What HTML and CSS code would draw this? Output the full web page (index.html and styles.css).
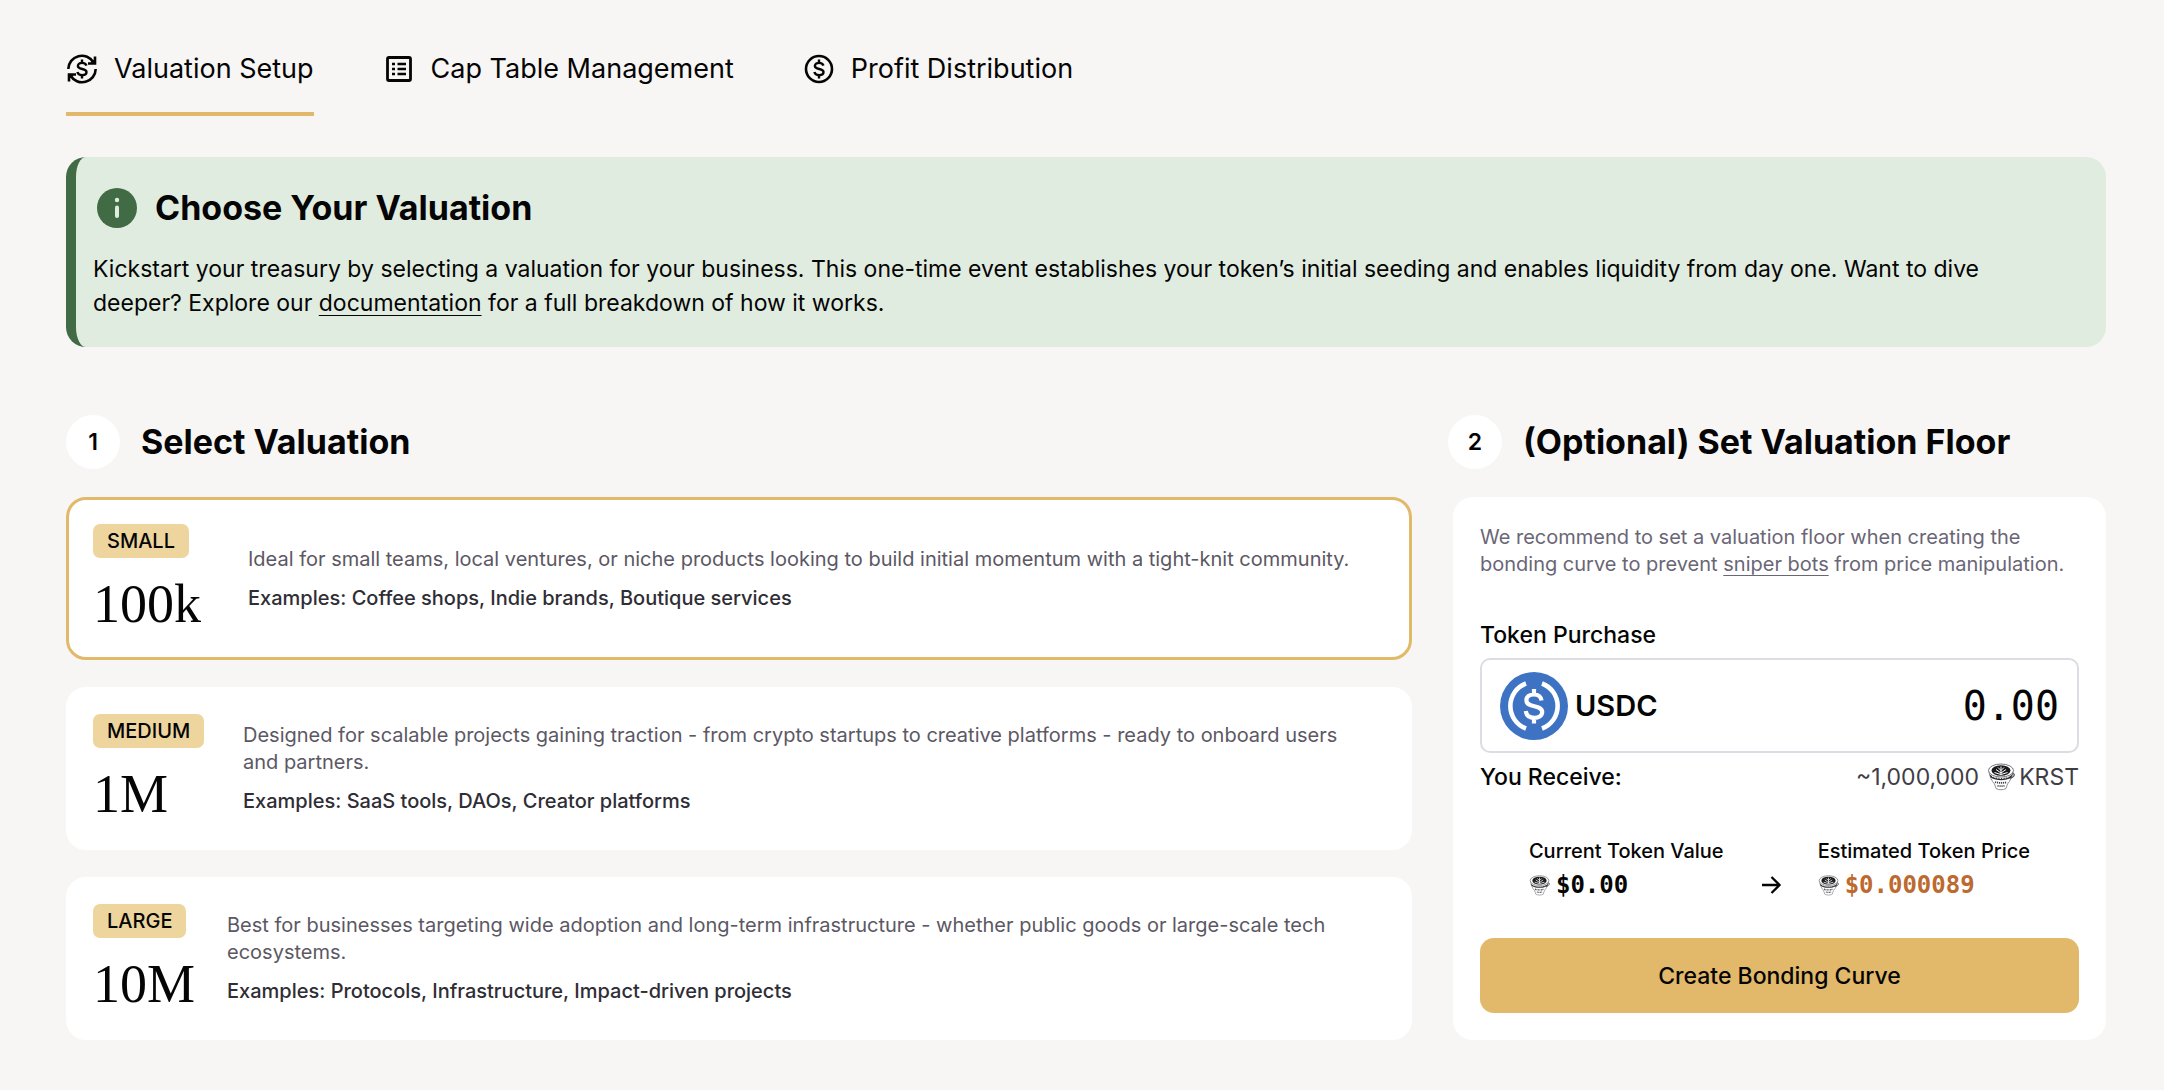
FILE: index.html
```html
<!DOCTYPE html>
<html lang="en">
<head>
<meta charset="utf-8">
<meta name="viewport" content="width=device-width, initial-scale=1">
<title>Valuation Setup</title>
<link rel="stylesheet" href="styles.css">
</head>
<body>
<svg class="sprite" aria-hidden="true">
  <symbol id="dollar" viewBox="0 0 14 20">
    <path d="M11.4 6.6C10.9 4.8 9.3 3.9 7.1 3.9 4.6 3.9 2.9 5 2.9 6.9c0 4.3 8.6 1.9 8.6 6.2 0 2-1.8 3.1-4.3 3.1-2.6 0-4.3-1.100-4.800-3.200M7 .6v3.200M7 16.200v3.200" fill="none" stroke="currentColor" stroke-width="2.400"/>
  </symbol>
  <symbol id="cup" viewBox="0 0 28 28">
    <path d="M2 8.500c.6 5 2.700 9.500 5.500 12.500l1.500 4.500c2.600 1.700 7.400 1.700 10 0l1.500-4.500c2.800-3 4.900-7.500 5.500-12.500" fill="#fff" stroke="#77757c" stroke-width=".8"/>
    <path d="M24.500 11c2.600-1.200 3.400.6 2.200 2.200-1 1.400-2.600 2-4 1.800" fill="none" stroke="#55535a" stroke-width="1.200"/>
    <ellipse cx="14" cy="7.500" rx="12.500" ry="6.500" fill="#fff" stroke="#55535a" stroke-width=".8"/>
    <ellipse cx="14" cy="7.500" rx="9.500" ry="5.200" fill="#1a1a1a"/>
    <path d="M14 11.500V3.500M14 10 9 6.500M14 10l5-3.500M14 7.500 11 4.500M14 7.500l3-3M14 11.500l-6.500-2M14 11.500l6.500-2" stroke="#fff" stroke-width="1" fill="none"/>
    <path d="M2.500 11.500c6 4.800 17 4.800 23 0l-1.200 3c-5.500 3.500-15 3.500-20.600 0z" fill="#2c2b30"/>
    <path d="M5 13.200c5 3 13 3 18 0" stroke="#fff" stroke-width="1" stroke-dasharray="1.600 1" fill="none"/>
    <path d="M8 19c4 1.200 8 1.200 12 0" stroke="#444" stroke-width="1.800" stroke-dasharray="1.200 .8" fill="none"/>
    <path d="M10.500 22.700c2.300.6 4.700.6 7 0" stroke="#444" stroke-width="1.600" stroke-dasharray="1.200 .8" fill="none"/>
  </symbol>
</svg>

<main class="page">
  <nav class="tabs" aria-label="Treasury">
    <a class="tab tab-active" href="#valuation" aria-current="page">
      <svg class="tab-icon" viewBox="0 0 32 32" aria-hidden="true">
        <g fill="none" stroke="currentColor" stroke-width="2.600">
          <path d="M2.300 16A13.500 13.500 0 0 1 27.500 9.500M29 3.500V10.500H22"/>
          <path d="M29.700 16A13.500 13.500 0 0 1 4.500 22.500M3 28.500V21.500H10"/>
        </g>
        <path d="M29.500 5v6h-6zM2.500 27v-6h6z" fill="currentColor"/>
        <use href="#dollar" x="9" y="6" width="14" height="20"/>
      </svg>
      Valuation Setup
    </a>
    <a class="tab" href="#cap-table">
      <svg class="tab-icon" viewBox="0 0 32 32" aria-hidden="true">
        <rect x="4.500" y="4.500" width="23" height="23" rx="1.500" fill="none" stroke="currentColor" stroke-width="2.800"/>
        <path d="M9 11h3M9 16h3M9 21h3M14.500 11h8.500M14.500 16h8.500M14.500 21h8.500" stroke="currentColor" stroke-width="2.600"/>
      </svg>
      Cap Table Management
    </a>
    <a class="tab" href="#profit">
      <svg class="tab-icon" viewBox="0 0 32 32" aria-hidden="true">
        <circle cx="16" cy="16" r="13" fill="none" stroke="currentColor" stroke-width="2.600"/>
        <use href="#dollar" x="9" y="6" width="14" height="20"/>
      </svg>
      Profit Distribution
    </a>
  </nav>

  <section class="banner">
    <div class="banner-head">
      <svg class="banner-icon" viewBox="0 0 48 48" aria-hidden="true">
        <circle cx="24" cy="24" r="20" fill="#416b44"/>
        <circle cx="24" cy="16" r="2.200" fill="#e1ece0"/>
        <path d="M24 23.500v8.500" stroke="#e1ece0" stroke-width="4" stroke-linecap="round"/>
      </svg>
      <h1 class="title">Choose Your Valuation</h1>
    </div>
    <p class="banner-text">Kickstart your treasury by selecting a valuation for your business. This one-time event establishes your token’s initial seeding and enables liquidity from day one. Want to dive deeper? Explore our <a class="link" href="#docs">documentation</a> for a full breakdown of how it works.</p>
  </section>

  <div class="steps">
    <div class="step"><span class="step-number">1</span><h2 class="title">Select Valuation</h2></div>
    <div class="step"><span class="step-number">2</span><h2 class="title">(Optional) Set Valuation Floor</h2></div>
  </div>

  <div class="columns">
    <div class="plans" role="radiogroup" aria-label="Select Valuation">
      <label class="plan">
        <input class="plan-radio" type="radio" name="plan" value="small" checked>
        <span class="plan-head plan-head-small"><span class="badge">SMALL</span><span class="plan-amount">100k</span></span>
        <span class="plan-body">
          <span class="plan-text">Ideal for small teams, local ventures, or niche products looking to build initial momentum with a tight-knit community.</span>
          <span class="plan-examples">Examples: Coffee shops, Indie brands, Boutique services</span>
        </span>
      </label>
      <label class="plan">
        <input class="plan-radio" type="radio" name="plan" value="medium">
        <span class="plan-head plan-head-medium"><span class="badge">MEDIUM</span><span class="plan-amount">1M</span></span>
        <span class="plan-body">
          <span class="plan-text">Designed for scalable projects gaining traction - from crypto startups to creative platforms - ready to onboard users and partners.</span>
          <span class="plan-examples">Examples: SaaS tools, DAOs, Creator platforms</span>
        </span>
      </label>
      <label class="plan">
        <input class="plan-radio" type="radio" name="plan" value="large">
        <span class="plan-head plan-head-large"><span class="badge">LARGE</span><span class="plan-amount">10M</span></span>
        <span class="plan-body">
          <span class="plan-text">Best for businesses targeting wide adoption and long-term infrastructure - whether public goods or large-scale tech ecosystems.</span>
          <span class="plan-examples">Examples: Protocols, Infrastructure, Impact-driven projects</span>
        </span>
      </label>
    </div>

    <form class="floor">
      <p class="floor-text">We recommend to set a valuation floor when creating the bonding curve to prevent <a class="link" href="#sniper-bots">sniper bots</a> from price manipulation.</p>
      <label class="field-label" for="amount">Token Purchase</label>
      <div class="field">
        <svg class="coin" viewBox="0 0 68 68" aria-hidden="true">
          <circle cx="34" cy="34" r="34" fill="#3e73c4"/>
          <path d="M26 11.500A24 24 0 0 0 26 56.500M42 11.500A24 24 0 0 1 42 56.500" fill="none" stroke="#fff" stroke-width="4.600"/>
          <path d="M41.500 28.500c-.6-3.900-3.300-6-7.600-6-4.500 0-7.500 2.200-7.500 5.700 0 8.300 15.800 3.700 15.800 11.900 0 3.500-3.200 5.700-8 5.700-4.900 0-7.900-2.300-8.400-6.700M34 17v6M34 45.500v6" fill="none" stroke="#fff" stroke-width="4.200"/>
        </svg>
        <span class="coin-name">USDC</span>
        <input class="amount" id="amount" type="text" inputmode="decimal" value="0.00">
      </div>
      <div class="receive">
        <span>You Receive:</span>
        <span class="receive-value">~1,000,000 <svg class="cup" aria-hidden="true"><use href="#cup"/></svg>KRST</span>
      </div>
      <div class="prices">
        <div class="price">
          <span>Current Token Value</span>
          <span class="price-value"><svg class="cup-small" aria-hidden="true"><use href="#cup"/></svg>$0.00</span>
        </div>
        <svg class="arrow" viewBox="0 0 26 26" aria-hidden="true"><path d="M4 13h17M13.500 5l8 8-8 8" fill="none" stroke="currentColor" stroke-width="2.300"/></svg>
        <div class="price">
          <span>Estimated Token Price</span>
          <span class="price-value price-new"><svg class="cup-small" aria-hidden="true"><use href="#cup"/></svg>$0.000089</span>
        </div>
      </div>
      <button class="submit" type="button">Create Bonding Curve</button>
    </form>
  </div>
</main>
</body>
</html>
```
FILE: styles.css
```css
* { box-sizing: border-box; }

body {
  margin: 0;
  background: #f7f6f4;
  color: #050505;
  font-family: Inter, "Liberation Sans", sans-serif;
  font-size: 23px;
  line-height: 34px;
}

h1, h2, p { margin: 0; }

.sprite { display: none; }

.page { padding: 48px 58px 48px 66px; }

.link {
  color: inherit;
  text-decoration: underline;
  text-decoration-thickness: 1px;
  text-underline-offset: 4px;
}

.title {
  font-size: 34px;
  font-weight: 700;
  line-height: 48px;
}

/* Tabs */
.tabs { display: flex; gap: 69px; }

.tab {
  display: flex;
  align-items: center;
  gap: 16px;
  padding: 4px 0 26px;
  border-bottom: 4px solid transparent;
  color: inherit;
  font-size: 27px;
  text-decoration: none;
}

.tab-active { border-bottom-color: #e2b96a; }

.tab-icon { width: 32px; height: 32px; }

/* Banner */
.banner {
  margin-top: 41px;
  padding: 27px 68px 27px 17px;
  border-left: 10px solid #416b44;
  border-radius: 20px;
  background: #e1ece0;
}

.banner-head {
  display: flex;
  align-items: center;
  gap: 14px;
  margin-bottom: 20px;
}

.banner-icon { width: 48px; height: 48px; }

/* Step headings */
.steps {
  display: grid;
  grid-template-columns: minmax(0, 1346fr) minmax(0, 658fr);
  gap: 36px;
  margin-top: 68px;
}

.step {
  display: flex;
  align-items: center;
  gap: 21px;
}

.step-number {
  width: 54px;
  height: 54px;
  border-radius: 50%;
  background: #fff;
  font-weight: 600;
  line-height: 54px;
  text-align: center;
}

/* Main columns */
.columns {
  display: grid;
  grid-template-columns: minmax(0, 1346fr) minmax(0, 653fr);
  gap: 41px;
  margin-top: 28px;
}

.plans {
  display: grid;
  gap: 27px;
}

.plan {
  display: flex;
  min-height: 163px;
  padding: 24px 36px 24px 24px;
  border: 3px solid #fff;
  border-radius: 20px;
  background: #fff;
  font-size: 20px;
  line-height: 27px;
  cursor: pointer;
}

.plan:has(:checked) { border-color: #e2b96a; }

.plan-radio {
  position: absolute;
  opacity: 0;
  pointer-events: none;
}

.plan-head {
  display: flex;
  flex: none;
  flex-direction: column;
  align-items: flex-start;
  gap: 17px;
}

.plan-head-small { width: 155px; }
.plan-head-medium { width: 150px; }
.plan-head-large { width: 134px; }

.badge {
  padding: 0 14px;
  border-radius: 7px;
  background: #eed59e;
  font-size: 20px;
  font-weight: 500;
  line-height: 34px;
}

.plan-amount {
  font-family: "Liberation Serif", serif;
  font-size: 54px;
  line-height: 58px;
}

.plan-body {
  display: flex;
  flex-direction: column;
  justify-content: center;
  gap: 12px;
}

.plan-text { color: #5b5864; }

.plan-examples { color: #2f2d35; font-weight: 500; }

/* Valuation floor */
.floor {
  display: flex;
  flex-direction: column;
  padding: 27px;
  border-radius: 20px;
  background: #fff;
}

.floor-text {
  color: #6a6676;
  font-size: 20px;
  line-height: 27px;
}

.field-label {
  margin: 40px 0 6px;
  font-weight: 500;
}

.field {
  display: flex;
  align-items: center;
  gap: 7px;
  height: 95px;
  padding: 0 18px;
  border: 2px solid #dcdce4;
  border-radius: 10px;
}

.coin { flex: none; width: 68px; height: 68px; }

.coin-name { font-size: 29px; font-weight: 600; }

.amount {
  flex: 1;
  min-width: 0;
  padding: 0;
  border: 0;
  background: none;
  color: inherit;
  font-family: "DejaVu Sans Mono", monospace;
  font-size: 40px;
  line-height: 48px;
  text-align: right;
}

.receive {
  display: flex;
  justify-content: space-between;
  margin-top: 7px;
  font-weight: 500;
}

.receive-value {
  display: flex;
  align-items: center;
  gap: 4px;
  color: #3f3d46;
  font-weight: 400;
}

.cup { width: 28px; height: 28px; margin-left: 4px; }

.cup-small { width: 21px; height: 21px; }

.prices {
  display: flex;
  align-items: flex-end;
  justify-content: center;
  gap: 34px;
  margin: 40px 0 36px;
  font-size: 20px;
  font-weight: 500;
  line-height: 34px;
}

.price { display: grid; }

.price-value {
  display: flex;
  align-items: center;
  gap: 6px;
  font-family: "DejaVu Sans Mono", monospace;
  font-size: 24px;
  font-weight: 700;
}

.price-new { color: #bc6a30; }

.arrow { width: 26px; height: 34px; }

.submit {
  height: 75px;
  border: 0;
  border-radius: 14px;
  background: #e2b96a;
  color: inherit;
  font: inherit;
  font-weight: 500;
  cursor: pointer;
}
```
